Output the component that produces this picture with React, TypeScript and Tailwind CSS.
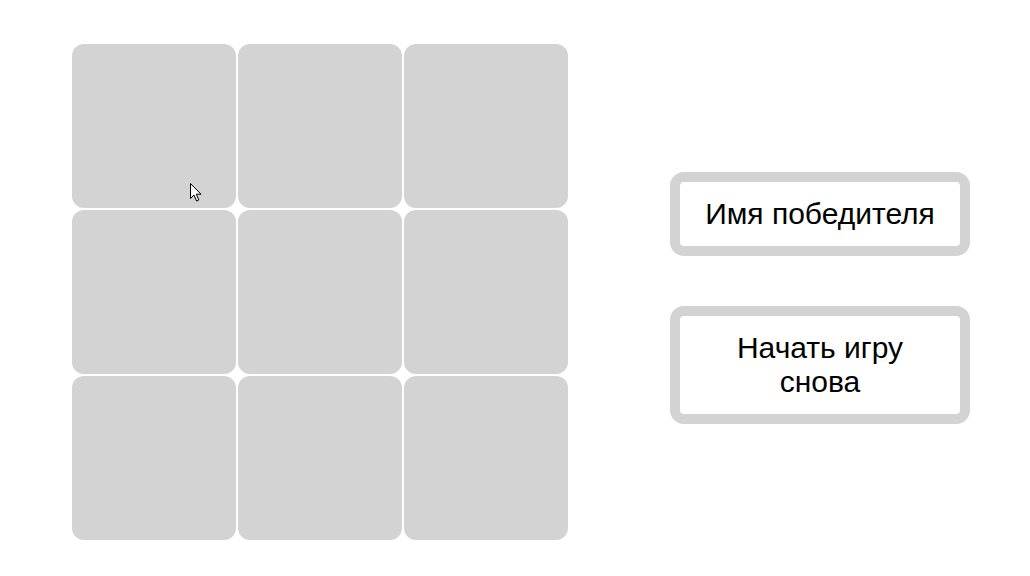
import React from "react";

const cells = Array.from({ length: 9 }, (_, i) => i);

function Cursor() {
  return (
    <svg
      className="absolute left-[190px] top-[183px] pointer-events-none"
      width="13"
      height="20"
      viewBox="0 0 13 20"
    >
      <path
        d="M0.5 0.5 L0.5 15.5 L4 12 L6.5 18 L8.8 17 L6.3 11.2 L11 11.2 Z"
        fill="#fff"
        stroke="#000"
        strokeWidth="1"
        strokeLinejoin="miter"
      />
    </svg>
  );
}

export default function App() {
  return (
    <div
      className="relative w-[1030px] h-[576px] bg-white flex items-start pl-[72px] pt-[44px] gap-[102px]"
      style={{ fontFamily: '"Liberation Sans", Arial, sans-serif' }}
    >
      <div className="grid grid-cols-[repeat(3,164px)] grid-rows-[repeat(3,164px)] gap-[2px]">
        {cells.map((i) => (
          <button key={i} className="bg-[#d3d3d3] rounded-xl" />
        ))}
      </div>

      <div className="flex flex-col gap-[50px] mt-[128px]">
        <div className="w-[300px] border-[10px] border-[#d3d3d3] rounded-[14px] bg-white py-[15px] px-6 text-center text-[30px] leading-[34px] text-black">
          Имя победителя
        </div>
        <button className="w-[300px] border-[10px] border-[#d3d3d3] rounded-[14px] bg-white py-[15px] px-6 text-center text-[30px] leading-[34px] text-black">
          Начать игру снова
        </button>
      </div>

      <Cursor />
    </div>
  );
}
